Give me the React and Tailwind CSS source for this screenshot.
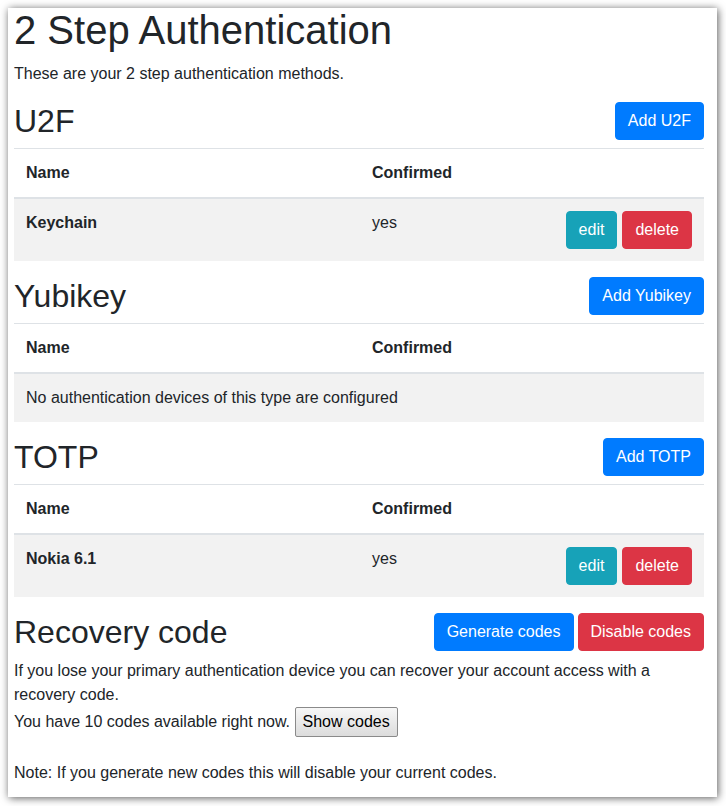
import React from 'react';

const font = { fontFamily: '"Liberation Sans", Arial, sans-serif' };

const methods = [
  { title: 'U2F', add: 'Add U2F', devices: [{ name: 'Keychain', confirmed: 'yes' }] },
  { title: 'Yubikey', add: 'Add Yubikey', devices: [] },
  { title: 'TOTP', add: 'Add TOTP', devices: [{ name: 'Nokia 6.1', confirmed: 'yes' }] },
];

const Btn = ({ color, children }) => (
  <button className={`${color} text-white border rounded-[4px] px-[12px] py-[6px] text-[16px] leading-[24px] whitespace-nowrap`}>
    {children}
  </button>
);

const Section = ({ title, add, devices }) => (
  <div>
    <div className="flex items-center justify-between mb-2">
      <h2 className="text-[32px] leading-[38px] font-normal">{title}</h2>
      <Btn color="bg-[#007bff] border-[#007bff]">{add}</Btn>
    </div>
    <table className="w-full table-fixed border-collapse mb-4 text-[16px] leading-[24px]">
      <colgroup>
        <col className="w-[346px]" />
        <col className="w-[196px]" />
        <col />
      </colgroup>
      <thead>
        <tr>
          <th className="text-left font-bold p-3 border-t border-b-2 border-[#dee2e6]">Name</th>
          <th className="text-left font-bold p-3 border-t border-b-2 border-[#dee2e6]">Confirmed</th>
          <th className="p-3 border-t border-b-2 border-[#dee2e6]"></th>
        </tr>
      </thead>
      <tbody>
        {devices.length === 0 ? (
          <tr className="bg-[#f2f2f2]">
            <td colSpan={3} className="p-3 border-t border-[#dee2e6]">No authentication devices of this type are configured</td>
          </tr>
        ) : (
          devices.map((d) => (
            <tr key={d.name} className="bg-[#f2f2f2]">
              <td className="p-3 align-top font-bold border-t border-[#dee2e6]">{d.name}</td>
              <td className="p-3 align-top border-t border-[#dee2e6]">{d.confirmed}</td>
              <td className="p-3 align-top border-t border-[#dee2e6]">
                <div className="flex justify-end gap-[5px]">
                  <Btn color="bg-[#17a2b8] border-[#17a2b8]">edit</Btn>
                  <Btn color="bg-[#dc3545] border-[#dc3545]">delete</Btn>
                </div>
              </td>
            </tr>
          ))
        )}
      </tbody>
    </table>
  </div>
);

export default function App() {
  return (
    <div className="w-[726px] h-[806px] bg-white pt-[8px] pl-[8px]" style={font}>
      <div className="w-[709px] h-[789px] bg-white overflow-hidden shadow-[1px_1px_8px_rgba(0,0,0,0.65)] pl-[6px] pr-[13px] text-[#212529]">
        <h1 className="text-[40px] leading-[48px] font-normal mt-[-2px] mb-2">2 Step Authentication</h1>
        <p className="text-[16px] leading-[24px] mb-4">These are your 2 step authentication methods.</p>
        {methods.map((m) => (
          <Section key={m.title} {...m} />
        ))}
        <div className="flex items-center justify-between mb-2">
          <h2 className="text-[32px] leading-[38px] font-normal">Recovery code</h2>
          <div className="flex gap-[4px]">
            <Btn color="bg-[#007bff] border-[#007bff]">Generate codes</Btn>
            <Btn color="bg-[#dc3545] border-[#dc3545]">Disable codes</Btn>
          </div>
        </div>
        <p className="text-[16px] leading-[24px]">
          If you lose your primary authentication device you can recover your account access with a recovery code.
          <br />
          You have 10 codes available right now.{' '}
          <button className="align-baseline border border-[#8a8a8a] rounded-[2px] bg-gradient-to-b from-[#f7f7f7] to-[#dcdcdc] px-[7px] py-[2px] text-[16px] leading-[24px] text-black">
            Show codes
          </button>
          <br />
          <br />
          Note: If you generate new codes this will disable your current codes.
        </p>
      </div>
    </div>
  );
}
